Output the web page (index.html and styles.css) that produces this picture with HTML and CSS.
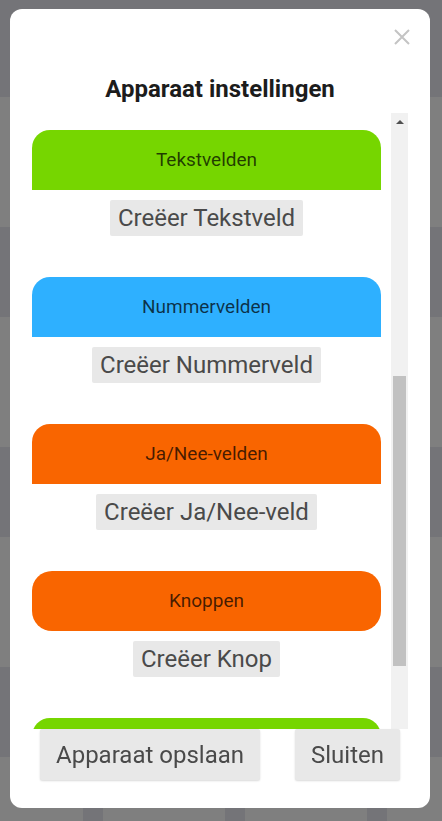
FILE: index.html
```html
<!DOCTYPE html>
<html lang="nl">
<head>
<meta charset="utf-8">
<title>Apparaat instellingen</title>
<link rel="stylesheet" href="styles.css">
</head>
<body>
<div class="page">
  <div class="tile"></div><div class="tile"></div><div class="tile"></div><div class="tile"></div>
  <div class="tile"></div><div class="tile"></div><div class="tile"></div><div class="tile"></div>
  <div class="tile"></div><div class="tile"></div><div class="tile"></div><div class="tile"></div>
  <div class="tile"></div><div class="tile"></div><div class="tile"></div><div class="tile"></div>
</div>
<div class="overlay">
  <div class="modal">
    <button class="close" aria-label="Sluiten">
      <svg width="16" height="16" viewBox="0 0 16 16"><path d="M1 1 L15 15 M15 1 L1 15" stroke="#c4c4c4" stroke-width="2" fill="none"/></svg>
    </button>
    <h2 class="title">Apparaat instellingen</h2>
    <div class="body">
      <div class="scroll">
        <section class="group">
          <div class="group-head green">Tekstvelden</div>
          <button class="create">Creëer Tekstveld</button>
        </section>
        <section class="group">
          <div class="group-head blue">Nummervelden</div>
          <button class="create">Creëer Nummerveld</button>
        </section>
        <section class="group">
          <div class="group-head orange">Ja/Nee-velden</div>
          <button class="create">Creëer Ja/Nee-veld</button>
        </section>
        <section class="group">
          <div class="group-head orange round">Knoppen</div>
          <button class="create">Creëer Knop</button>
        </section>
        <section class="group">
          <div class="group-head green"></div>
        </section>
      </div>
      <div class="scrollbar">
        <div class="arrow"></div>
        <div class="thumb"></div>
      </div>
    </div>
    <div class="footer">
      <button class="action">Apparaat opslaan</button>
      <button class="action">Sluiten</button>
    </div>
  </div>
</div>
</body>
</html>
```
FILE: styles.css
```css
* { box-sizing: border-box; }

html, body {
  margin: 0;
  height: 100%;
}

body {
  background: #e9e9f0;
  font-family: Roboto, "Liberation Sans", sans-serif;
  overflow: hidden;
}

.page {
  height: 100vh;
  overflow: hidden;
  display: grid;
  grid-template-columns: 83px 122px 122px 1fr;
  grid-auto-rows: 130px;
  column-gap: 20px;
  row-gap: 90px;
  padding-top: 97px;
}

.tile {
  background: #ffffff;
}

.overlay {
  position: fixed;
  inset: 0;
  background: rgba(0, 0, 0, 0.5);
  padding: 9px 12px 13px 10px;
  display: flex;
}

.modal {
  position: relative;
  flex: 1;
  background: #ffffff;
  border-radius: 12px;
  display: flex;
  flex-direction: column;
}

.close {
  position: absolute;
  top: 20px;
  right: 20px;
  width: 16px;
  height: 16px;
  padding: 0;
  border: none;
  background: none;
  display: flex;
}

.title {
  margin: 0 0 10px;
  padding-top: 66px;
  height: 94px;
  line-height: 28px;
  font-size: 24px;
  font-weight: 700;
  color: #1c1c1c;
  text-align: center;
}

.body {
  display: flex;
  height: 616px;
  margin: 0 22px;
  gap: 10px;
}

.scroll {
  flex: 1;
  overflow: hidden;
  padding-top: 17px;
}

.group {
  display: flex;
  flex-direction: column;
  align-items: center;
  margin-bottom: 41px;
}

.group-head {
  align-self: stretch;
  height: 60px;
  line-height: 60px;
  text-align: center;
  font-size: 19px;
  color: rgba(0, 0, 0, 0.72);
  border-radius: 18px 18px 0 0;
}

.group-head.round { border-radius: 20px; }

.green { background: #76d600; }
.blue { background: #2eb0ff; }
.orange { background: #f96500; }

.create {
  margin-top: 10px;
  height: 36px;
  padding: 0 8px;
  border: none;
  border-radius: 2px;
  background: #e8e8e8;
  color: #4a4a4a;
  font-family: Roboto, "Liberation Sans", sans-serif;
  font-size: 24px;
  line-height: 36px;
}

.scrollbar {
  width: 17px;
  background: #f1f1f1;
  display: flex;
  flex-direction: column;
  align-items: center;
}

.arrow {
  margin-top: 7px;
  width: 0;
  height: 0;
  border-left: 4px solid transparent;
  border-right: 4px solid transparent;
  border-bottom: 4px solid #505050;
}

.thumb {
  margin-top: 252px;
  width: 13px;
  height: 290px;
  background: #c1c1c1;
}

.footer {
  display: flex;
  justify-content: space-between;
  padding: 0 30px;
}

.action {
  height: 51px;
  padding: 0 16px;
  border: none;
  border-radius: 2px;
  background: #e8e8e8;
  color: #4a4a4a;
  font-family: Roboto, "Liberation Sans", sans-serif;
  font-size: 24px;
  box-shadow: 0 1px 2px rgba(0, 0, 0, 0.15);
}
```
